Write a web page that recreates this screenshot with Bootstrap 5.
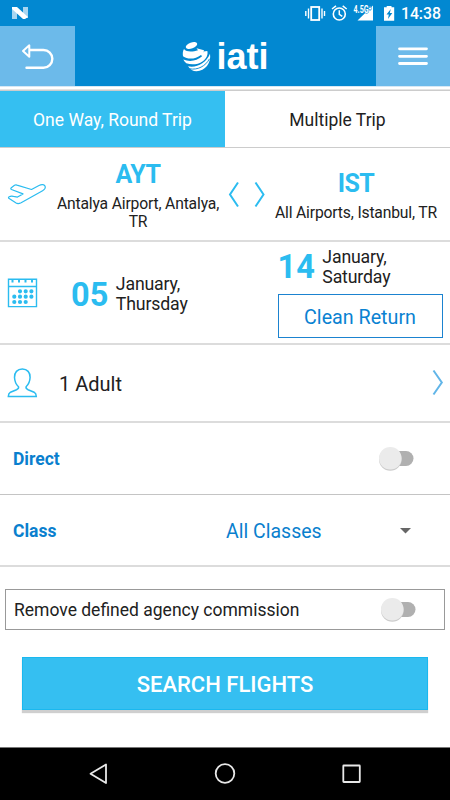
<!DOCTYPE html>
<html lang="en">
<head>
<meta charset="utf-8">
<meta name="viewport" content="width=device-width, initial-scale=1">
<title>iati flight search</title>
<link href="https://cdn.jsdelivr.net/npm/bootstrap@5.3.0/dist/css/bootstrap.min.css" rel="stylesheet">
<style>
body{font-family:Roboto,"Liberation Sans",sans-serif;color:#212121;width:450px;height:800px;overflow:hidden;line-height:1.2}
svg{display:block;flex:none}
.statusbar{height:26px;background:#0288d1;color:#fff;padding:0 9px 0 12px}
.clock{font-size:15.8px;font-weight:500;line-height:26px;padding:2px 0 0 2px}
.appbar{height:60px;background:#0288d1}
.sidebtn{width:75px;background:#6cbaea;border:0;padding:0}
.brand{font:700 36px/58px "Liberation Sans",sans-serif;color:#fff;margin-left:3px;padding-top:2px}
.strip{height:5px;background:linear-gradient(#d6e8f5 0 1px,#fff 1px 3px,#e4e4e4 3px 4px,#ccc 4px)}
.tabs{height:57px;border-bottom:1px solid #ccc;font-size:17.5px}
.tabs>div{padding-top:2px}
.tab-on{background:#35bff1;color:#fff}
.line{border-bottom:2px solid #dcdcdc}
.route{height:94px}
.from{width:176px;padding-top:13px}
.code{font-size:25px;font-weight:700;color:#2bbcf0;line-height:28px;letter-spacing:-.5px}
.port{font-size:15.7px;line-height:18px;padding-top:6px;letter-spacing:-.17px}
.to{padding:3px 6px 0 0}
.dates{height:103px}
.daynum{font-size:32.5px;font-weight:700;color:#2bbcf0;line-height:40px;padding-top:1px}
.dayname{font-size:17.7px;line-height:20px;letter-spacing:-.15px;margin-left:-.5px}
.depart{width:206.500px;padding-top:3px}
.clean{width:165px;height:44px;border:1px solid #1b83d0;color:#0a82d2;background:#fff;font-size:19.7px;padding:3px 0 0;margin-top:7px}
.pax{height:78px;font-size:20px}
.pax span{padding-top:2px}
.opt{height:72px;color:#0a7fce;font-size:17.5px}
.opt strong{font-weight:700;margin-left:13px;padding-top:2px}
.opt-first{border-bottom:1px solid #c4c4c4}
.label-class{width:213px}
.sel{font-size:19.5px;padding-top:4px}
.fee{margin:22px 5px 0;height:41px;border:1px solid #999;font-size:17.5px;padding:1px 0 0 8px}
.toggle{width:36px;height:26px}
.toggle-direct{margin-right:36px}
.toggle-fee{margin-right:28px}
.caret{margin:2px 39px 0 0}
.search{margin:27px 22px 0;height:53px;background:#35bff1;border:1px solid #1ab8ef;color:#fff;font-size:22px;font-weight:500;box-shadow:0 3px 1px #cfcfcf;padding:3px 0 0}
.navkeys{height:53px;background:#000;border-top:1px solid #777}
</style>
<script src="https://cdn.jsdelivr.net/npm/bootstrap@5.3.0/dist/js/bootstrap.bundle.min.js"></script>
</head>
<body class="d-flex flex-column bg-white">
<div class="statusbar d-flex align-items-center">
  <svg width="16" height="14" viewBox="0 0 16 14"><path d="M0 1h5v12H0zM11 1h5v11h-5z" fill="#a8d5f0"/><path d="M0 1h5l11 10-3 2h-2L0 3z" fill="#fff"/></svg>
  <svg class="ms-auto" width="94" height="26" viewBox="305 0 94 26">
    <rect x="311.2" y="7" width="8" height="13" fill="none" stroke="#fff" stroke-width="1.8"/>
    <path d="M308.5 8.5v10M305.8 11v5M322 8.5v10M324.5 11v5" stroke="#fff" stroke-width="1.4"/>
    <circle cx="339.3" cy="14" r="6" fill="none" stroke="#fff" stroke-width="1.6"/>
    <path d="M339.3 10.3v4l3 2M332 9l4-3.2M346.700 9l-4-3.200" fill="none" stroke="#fff" stroke-width="1.5"/>
    <path d="M357.500 20.500h15.500V5.500z" fill="#fff"/>
    <text x="353.500" y="13" font-size="10" font-weight="700" textLength="18" lengthAdjust="spacingAndGlyphs" font-family="Roboto, sans-serif" fill="#fff" stroke="#0288d1" stroke-width="1.200" paint-order="stroke">4.5G⁺</text>
    <path d="M384 7.200h2.700V6h4.800v1.200h2.700v13.500H384z" fill="#fff"/>
    <path d="M390.800 9l-4.300 5.500h2.300l-.8 4.500 4.300-6h-2.500z" fill="#0288d1"/>
  </svg>
  <span class="clock">14:38</span>
</div>
<header class="appbar d-flex justify-content-between">
  <button class="sidebtn d-flex" aria-label="Back">
    <svg width="75" height="60" viewBox="0 26 75 60"><path d="M29 50h14.500a8.800 8.800 0 0 1 0 17.700H26.500" fill="none" stroke="#fff" stroke-width="2.400" stroke-linecap="round"/><path d="M29.300 45.300v11.400L23 51z" fill="#6cbaea" stroke="#fff" stroke-width="2" stroke-linejoin="round"/></svg>
  </button>
  <div class="d-flex">
    <svg width="32" height="60" viewBox="182 25 32 60">
      <ellipse cx="192.500" cy="44.500" rx="6" ry="2.900" transform="rotate(-20 192.500 44.500)" fill="#fff"/>
      <path d="M185 48c2.500 3.200 8.500 3 14 1.200l-1.500-2 7.500 2-1.500 6.500-1.500-1.800c-5.500 4.200-13 5-18 1.300-.4-2.700-.2-5.200 1-7.200z" fill="#fff"/>
      <path d="M184.300 58.500c6.500 2.800 14 1.200 18.500-3l1.700-5 3.800-.5c1 3.500-.8 7.500-4.500 10.200-5 3.500-11.500 4-16.500 2-1.300-1-2.300-2.300-3-3.700z" fill="#fff"/>
      <path d="M189 65.300c8.500 1.800 18-3 22-12.500 1.500 9-5 17.500-13.500 17.500-3.500 0-6.500-2-8.500-5z" fill="#fff"/>
      <path d="M190.500 67.800c8 1.500 16-2.500 20-10" fill="none" stroke="#0288d1" stroke-width=".9"/>
    </svg>
    <div class="brand">iati</div>
  </div>
  <button class="sidebtn d-flex" aria-label="Menu">
    <svg width="75" height="60" viewBox="375 26 75 60"><path d="M375.500 26v60" stroke="#0288d1"/><path d="M399.500 48.800h27M399.500 56.300h27M399.500 63.500h27" stroke="#fff" stroke-width="2.800" stroke-linecap="round"/></svg>
  </button>
</header>
<div class="strip"></div>
<div class="tabs d-flex text-center">
  <div class="tab-on w-50 d-flex align-items-center justify-content-center">One Way, Round Trip</div>
  <div class="w-50 d-flex align-items-center justify-content-center">Multiple Trip</div>
</div>
<section class="route line d-flex">
  <svg width="50" height="92" viewBox="0 148 50 92"><path d="M11 188l3.500-2.700c.8-.5 1.600-.5 2.500-.2l14.500 4.400 7.500-4c3-1.600 5.600-.8 6.100.8.600 1.800-.5 3.300-2.500 4.400l-21.500 12c-2 1-3.500 1.200-5 .3l-7.300-4.700c-.6-.6-.3-1.200.4-1.600 1.800-1 2.800-.7 4.300-.3l4 .7 5.500-3.200-11.500-4.400c-.8-.5-.9-1-.5-1.500z" fill="none" stroke="#2bbcf0" stroke-width="1.200" stroke-linejoin="round"/></svg>
  <div class="from text-center"><div class="code">AYT</div><div class="port">Antalya Airport, Antalya,<br>TR</div></div>
  <svg width="42" height="92" viewBox="226 148 42 92"><path d="M238 182.500l-8 12 8 12M255.500 182.500l8 12-8 12" fill="none" stroke="#2bbcf0" stroke-width="2"/></svg>
  <div class="to flex-fill text-center d-flex flex-column justify-content-center"><div class="code">IST</div><div class="port">All Airports, Istanbul, TR</div></div>
</section>
<section class="dates line d-flex">
  <svg width="71" height="101" viewBox="0 242 71 101"><g fill="none" stroke="#2bbcf0"><path d="M8.500 279.300h28v27.300h-28zM8.500 286.500h28" stroke-width="1.400"/><path d="M12.500 279v3.500M19 279v3.500M25.500 279v3.500M32 279v3.500" stroke-width="2"/><path d="M20 291.300h13M14.300 296.700h19M14.300 302h13" stroke-width="4.200" stroke-linecap="round" stroke-dasharray="0 5.700"/></g></svg>
  <div class="depart d-flex align-items-center gap-2"><div class="daynum">05</div><div class="dayname">January,<br>Thursday</div></div>
  <div class="d-flex flex-column"><div class="d-flex align-items-center gap-2 pt-1"><div class="daynum">14</div><div class="dayname">January,<br>Saturday</div></div><button class="clean">Clean Return</button></div>
</section>
<section class="pax line d-flex align-items-center">
  <svg width="59" height="76" viewBox="0 345 59 76"><path d="M22.300 369c5 0 8 3.500 7.800 8.500-.2 3.500-1.500 7-4 9.200-.5 1.500.5 2.300 2 3l6 2.500c1.500.8 2.200 2 2.200 4.300H8.300c0-2.300.7-3.500 2.200-4.300l6-2.500c1.500-.7 2.500-1.500 2-3-2.500-2.200-3.800-5.700-4-9.200-.2-5 2.800-8.500 7.800-8.500z" fill="none" stroke="#2bbcf0" stroke-width="1.500"/></svg>
  <span>1 Adult</span>
  <svg class="ms-auto" width="20" height="76" viewBox="430 345 20 76"><path d="M433.500 370.500l8.300 12-8.300 12" fill="none" stroke="#61b5e8" stroke-width="2"/></svg>
</section>
<section class="opt opt-first d-flex align-items-center">
  <strong>Direct</strong>
  <svg class="toggle toggle-direct ms-auto" viewBox="378 446 36 26"><rect x="386" y="451" width="27.500" height="15" rx="7.500" fill="#b0b0b0"/><circle cx="390.300" cy="459.400" r="11.300" fill="#ccc"/><circle cx="390.300" cy="458.300" r="11.300" fill="#ebebeb"/></svg>
</section>
<section class="opt line d-flex align-items-center">
  <strong class="label-class">Class</strong>
  <span class="sel">All Classes</span>
  <svg class="caret ms-auto" width="11" height="6" viewBox="0 0 11 6"><path d="M0 0h11L5.500 5.500z" fill="#666"/></svg>
</section>
<div class="fee d-flex align-items-center">
  <span>Remove defined agency commission</span>
  <svg class="toggle toggle-fee ms-auto" viewBox="377 446 36 26"><rect x="386" y="451" width="26.500" height="15" rx="7.500" fill="#b0b0b0"/><circle cx="389.300" cy="459.400" r="11.300" fill="#ccc"/><circle cx="389.300" cy="458.300" r="11.300" fill="#ebebeb"/></svg>
</div>
<button class="search">SEARCH FLIGHTS</button>
<footer class="navkeys mt-auto">
  <svg width="450" height="52" viewBox="0 748 450 52"><g fill="none" stroke="#e8e8e8" stroke-width="1.800" stroke-linejoin="round"><path d="M106 764.500v18.500l-15.500-9.250z"/><circle cx="225" cy="773.500" r="9.300"/><rect x="343.300" y="765.500" width="16.500" height="16.500" rx=".5"/></g></svg>
</footer>
</body>
</html>
